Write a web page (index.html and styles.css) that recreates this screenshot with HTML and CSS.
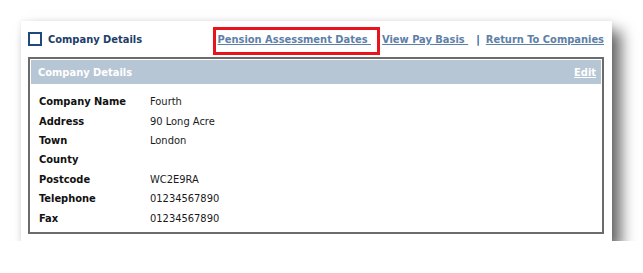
FILE: index.html
```html
<!DOCTYPE html>
<html>
<head>
<meta charset="utf-8">
<link rel="stylesheet" href="styles.css">
</head>
<body>
<div class="card">
  <div class="topbar">
    <div class="title">
      <span class="check"></span>
      <span class="title-text">Company Details</span>
    </div>
    <div class="links">
      <a class="link">Pension Assessment Dates&nbsp;</a>
      <a class="link">View Pay Basis&nbsp;</a>
      <span class="sep">|</span>
      <a class="link">Return To Companies</a>
    </div>
  </div>
  <div class="panel">
    <div class="panel-head">
      <span>Company Details</span>
      <a class="edit">Edit</a>
    </div>
    <div class="rows">
      <div class="row"><span class="label">Company Name</span><span class="value">Fourth</span></div>
      <div class="row"><span class="label">Address</span><span class="value">90 Long Acre</span></div>
      <div class="row"><span class="label">Town</span><span class="value">London</span></div>
      <div class="row"><span class="label">County</span><span class="value"></span></div>
      <div class="row"><span class="label">Postcode</span><span class="value">WC2E9RA</span></div>
      <div class="row"><span class="label">Telephone</span><span class="value">01234567890</span></div>
      <div class="row"><span class="label">Fax</span><span class="value">01234567890</span></div>
    </div>
  </div>
  <div class="highlight"></div>
</div>
</body>
</html>
```
FILE: styles.css
```css
html, body {
  margin: 0;
  padding: 0;
  background: #ffffff;
}
body {
  font-family: "DejaVu Sans Condensed", "DejaVu Sans", sans-serif;
  font-stretch: condensed;
  font-size: 11px;
  color: #111;
}
.card {
  position: relative;
  margin: 21px 0 0 21px;
  width: 576px;
  height: 209px;
  padding: 11px 8px 0 7px;
  background: #fff;
  box-shadow: 9px 10px 14px rgba(0,0,0,0.6), 0 0 6px rgba(0,0,0,0.08);
}
.topbar {
  display: flex;
  justify-content: space-between;
  align-items: center;
  height: 14px;
  margin-bottom: 11px;
}
.title {
  display: flex;
  align-items: center;
  gap: 6px;
}
.check {
  width: 10px;
  height: 10px;
  border: 2px solid #1d4a7e;
}
.title-text {
  font-weight: bold;
  color: #1c3d6b;
}
.links {
  display: flex;
  align-items: center;
  font-weight: bold;
  padding-top: 1px;
}
.link {
  color: #5d80a8;
  text-decoration: underline;
}
.link + .link { margin-left: 11px; }
.sep {
  color: #24508a;
  margin: 0 6px 0 8px;
}
.panel {
  border: 2px solid #6b6b6b;
  padding: 1px;
  height: 171px;
}
.panel-head {
  display: flex;
  justify-content: space-between;
  align-items: center;
  height: 24px;
  padding: 0 5px 0 7px;
  background: #b7c6d5;
  color: #fff;
  font-weight: bold;
}
.edit {
  color: #fff;
  text-decoration: underline;
}
.rows {
  padding: 8px 0 0 8px;
}
.row {
  display: flex;
  height: 19.4px;
  align-items: center;
}
.label {
  width: 111px;
  font-weight: bold;
  color: #111;
}
.value {
  color: #1a1a1a;
}
.highlight {
  position: absolute;
  left: 192px;
  top: 6px;
  width: 161px;
  height: 22px;
  border: 3px solid #e8141c;
}
```
